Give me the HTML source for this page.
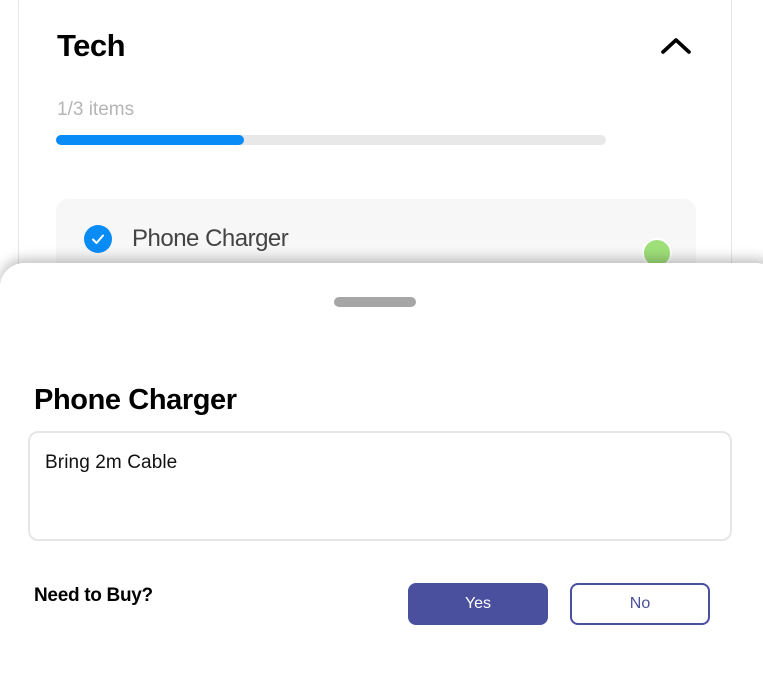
<!DOCTYPE html>
<html style="width:763px;height:698px;overflow:hidden"><head><style>
*{margin:0;padding:0;box-sizing:border-box}
body{width:763px;height:698px;overflow:hidden;background:#fff;font-family:"Liberation Sans",sans-serif;position:relative}
.card{position:absolute;left:18px;top:-20px;width:714px;height:400px;border:1px solid #e6e6e6;border-radius:24px;background:#fff}
.abs{position:absolute}
</style></head><body>
<div class="card"></div>
<div class="abs" style="left:57px;top:28px;font-size:31px;font-weight:bold;color:#000;letter-spacing:-0.5px">Tech</div>
<svg class="abs" style="left:660px;top:36px" width="32" height="20" viewBox="0 0 32 20"><path d="M3 16 L16 4 L29 16" fill="none" stroke="#000" stroke-width="3.6" stroke-linecap="round" stroke-linejoin="round"/></svg>
<div class="abs" style="left:57px;top:99px;font-size:19px;color:#b5b5b5;letter-spacing:0">1/3 items</div>
<div class="abs" style="left:56px;top:135px;width:550px;height:10px;border-radius:5px;background:#e8e8e8"></div>
<div class="abs" style="left:56px;top:135px;width:188px;height:10px;border-radius:5px;background:#0a8cf6"></div>
<div class="abs" style="left:56px;top:199px;width:640px;height:90px;border-radius:12px;background:#f7f7f7"></div>
<div class="abs" style="left:84px;top:225px;width:28px;height:28px;border-radius:50%;background:#0a8cf6"></div>
<svg class="abs" style="left:84px;top:225px" width="28" height="28" viewBox="0 0 28 28"><path d="M9 14.5 L12.5 18 L19 10.5" fill="none" stroke="#fff" stroke-width="2" stroke-linecap="round" stroke-linejoin="round"/></svg>
<div class="abs" style="left:132px;top:225px;font-size:24px;color:#444;letter-spacing:-0.5px">Phone Charger</div>
<div class="abs" style="left:642px;top:238px;width:30px;height:30px;border-radius:50%;background:#9fe07a;border:2px solid #fff"></div>
<div class="abs" style="left:0;top:263px;width:780px;height:460px;background:#fff;border-radius:24px 24px 0 0;box-shadow:0 -4px 12px rgba(0,0,0,0.25)"></div>
<div class="abs" style="left:334px;top:297px;width:82px;height:10px;border-radius:5px;background:#a6a6a6"></div>
<div class="abs" style="left:34px;top:384px;font-size:29px;font-weight:bold;color:#000;letter-spacing:-0.4px">Phone Charger</div>
<div class="abs" style="left:28px;top:431px;width:704px;height:110px;border:2px solid #e6e6e6;border-radius:10px"></div>
<div class="abs" style="left:45px;top:452px;font-size:19px;color:#111;letter-spacing:0.1px">Bring 2m Cable</div>
<div class="abs" style="left:34px;top:585px;font-size:19px;font-weight:bold;color:#000;letter-spacing:-0.3px">Need to Buy?</div>
<div class="abs" style="left:408px;top:583px;width:140px;height:42px;border-radius:8px;background:#4a4f9e;color:#fff;font-size:16px;text-align:center;line-height:42px">Yes</div>
<div class="abs" style="left:570px;top:583px;width:140px;height:42px;border-radius:8px;border:2px solid #4a4f9e;color:#4a4f9e;font-size:16px;text-align:center;line-height:38px">No</div>
</body></html>
